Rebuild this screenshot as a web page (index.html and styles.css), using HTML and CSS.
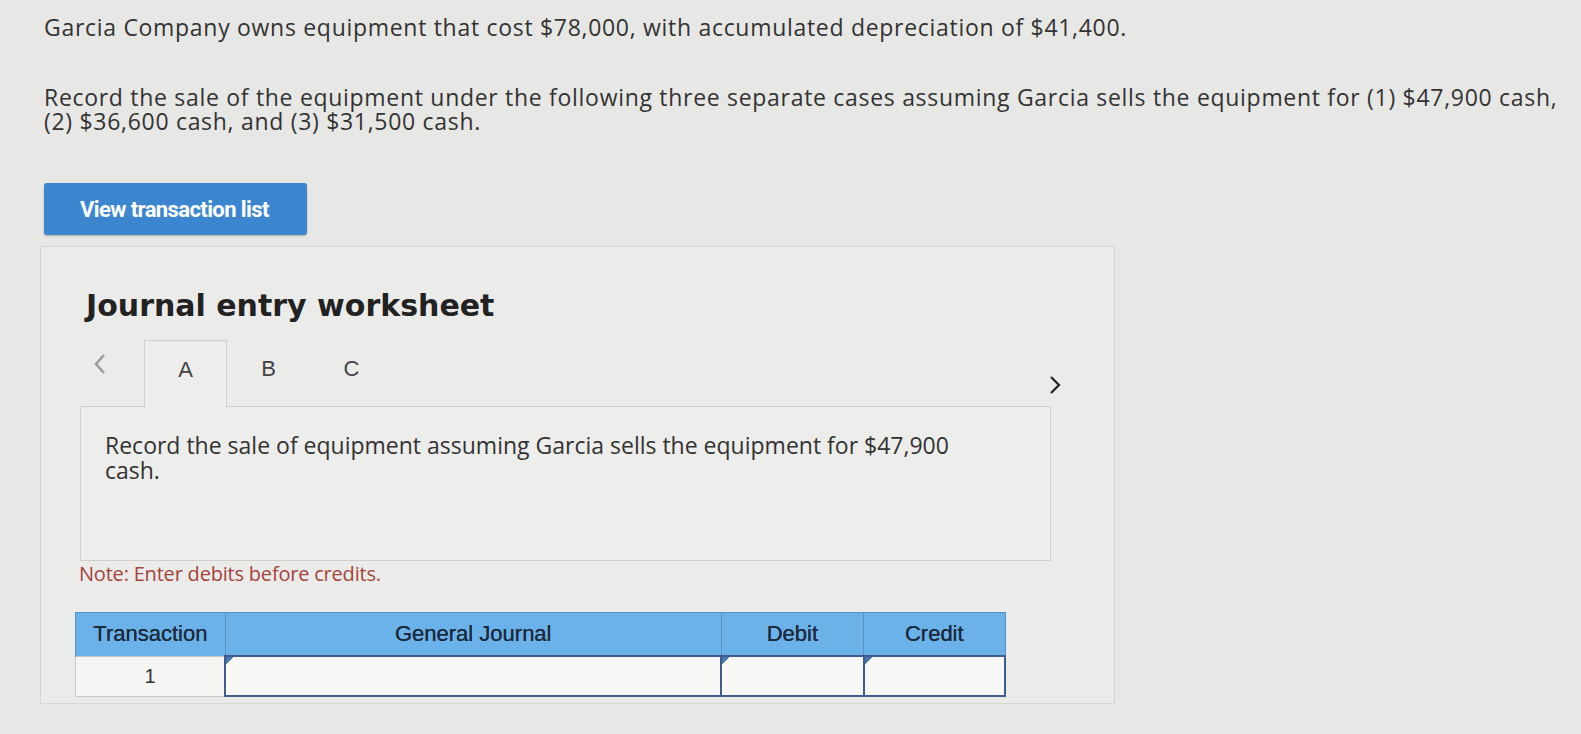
FILE: index.html
```html
<!DOCTYPE html>
<html>
<head>
<meta charset="utf-8">
<link rel="stylesheet" href="styles.css">
</head>
<body>
<div class="page">
  <p class="q">Garcia Company owns equipment that cost $78,000, with accumulated depreciation of $41,400.</p>
  <p class="q q2">Record the sale of the equipment under the following three separate cases assuming Garcia sells the equipment for (1) $47,900 cash, (2) $36,600 cash, and (3) $31,500 cash.</p>
  <button class="btn">View transaction list</button>
  <div class="panel">
    <h2 class="title">Journal entry worksheet</h2>
    <div class="tabs">
      <span class="chev left"><svg width="14" height="24" viewBox="0 0 14 24"><path d="M11 3 L3 12 L11 21" fill="none" stroke="#9a9a9a" stroke-width="2.5"/></svg></span>
      <div class="tab active">A</div>
      <div class="tab">B</div>
      <div class="tab">C</div>
      <span class="chev right"><svg width="14" height="24" viewBox="0 0 14 24"><path d="M3 4 L11 12 L3 20" fill="none" stroke="#222" stroke-width="2.2"/></svg></span>
    </div>
    <div class="content">
      <p>Record the sale of equipment assuming Garcia sells the equipment for $47,900 cash.</p>
    </div>
    <p class="note">Note: Enter debits before credits.</p>
    <table class="journal">
      <thead>
        <tr><th class="c1">Transaction</th><th class="c2">General Journal</th><th class="c3">Debit</th><th class="c4">Credit</th></tr>
      </thead>
      <tbody>
        <tr><td class="num">1</td><td class="inp"></td><td class="inp"></td><td class="inp"></td></tr>
      </tbody>
    </table>
  </div>
</div>
</body>
</html>
```
FILE: styles.css
```css
html, body { margin: 0; padding: 0; }
body {
  background: #e7e7e5;
  font-family: "Open Sans", "Lato", sans-serif;
  color: #333;
  width: 1581px;
  height: 734px;
  overflow: hidden;
}
.page { padding: 15px 0 0 44px; }
.q {
  margin: 0;
  font-size: 23px;
  letter-spacing: 0.7px;
  line-height: 24px;
  width: 1522px;
}
.q2 { margin-top: 46px; }
.btn {
  display: block;
  margin-top: 50px;
  width: 263px;
  height: 52px;
  background: #3b86cf;
  border: none;
  border-radius: 3px;
  color: #fff;
  font-family: "Roboto", "Liberation Sans", sans-serif;
  font-weight: 700;
  font-size: 22px;
  letter-spacing: -0.6px;
  text-align: left;
  padding: 0 0 0 36px;
  box-shadow: 0 1px 2px rgba(0,0,0,0.25);
}
.panel {
  margin: 11px 0 0 -4px;
  width: 1075px;
  height: 458px;
  border: 1px solid #d6d6d3;
  background: #ebebe9;
  box-sizing: border-box;
  padding: 42px 50px 0 38px;
}
.title {
  margin: 0 0 0 7px;
  font-family: "DejaVu Sans", Verdana, sans-serif;
  font-weight: 700;
  font-size: 30px;
  color: #222;
  line-height: 34px;
}
.tabs {
  display: flex;
  align-items: flex-start;
  margin-top: 17px;
  height: 67px;
  font-family: "Liberation Sans", Arial, sans-serif;
  font-size: 22px;
  color: #444;
}
.chev.left { margin: 12px 0 0 14px; width: 14px; }
.tab {
  width: 83px;
  height: 67px;
  box-sizing: border-box;
  padding-top: 16px;
  text-align: center;
}
.tab.active {
  margin-left: 37px;
  border: 1px solid #cfcfcc;
  border-bottom: none;
  background: #ededeb;
  position: relative;
  z-index: 1;
  height: 68px;
}
.chev.right { margin: 33px 2px 0 auto; }
.content {
  margin-top: -1px;
  margin-left: 1px;
  width: 971px;
  height: 155px;
  border: 1px solid #cfcfcc;
  background: #ededeb;
  box-sizing: border-box;
  padding: 26px 24px 0 24px;
}
.content p {
  margin: 0;
  font-family: "Open Sans", sans-serif;
  font-size: 23px;
  line-height: 25px;
  color: #333;
  width: 880px;
}
.note {
  margin: 2px 0 0 0;
  font-family: "Open Sans", sans-serif;
  font-size: 20px;
  letter-spacing: -0.2px;
  line-height: 22px;
  color: #a4443c;
}
.journal {
  margin: 27px 0 0 -4px;
  border-collapse: collapse;
  width: 931px;
  font-family: "Liberation Sans", Arial, sans-serif;
  font-size: 22px;
  color: #1c2a3a;
}
.journal th {
  background: #6bb2eb;
  height: 42px;
  font-weight: 400;
  border-left: 1px solid #5a90c4;
  border-top: 1px solid #5a90c4;
  padding: 0;
  text-shadow: 0 0 0.6px #1c2a3a;
}
.journal .c1 { width: 149px; }
.journal .c2 { width: 498px; }
.journal .c3 { width: 142px; }
.journal .c4 { width: 141px; border-right: 1px solid #5a90c4; }
.journal td {
  height: 38px;
  background: #f5f5f4;
  padding: 0;
}
.journal td.num {
  text-align: center;
  border: 1px solid #c9c9c6;
  color: #333;
  font-size: 20px;
}
.journal td.inp {
  border: 2px solid #3e5d8c;
  background: #f8f8f7 linear-gradient(135deg, #4a78b0 0 5px, transparent 5px) no-repeat;
  background-size: 10px 10px;
}
```
